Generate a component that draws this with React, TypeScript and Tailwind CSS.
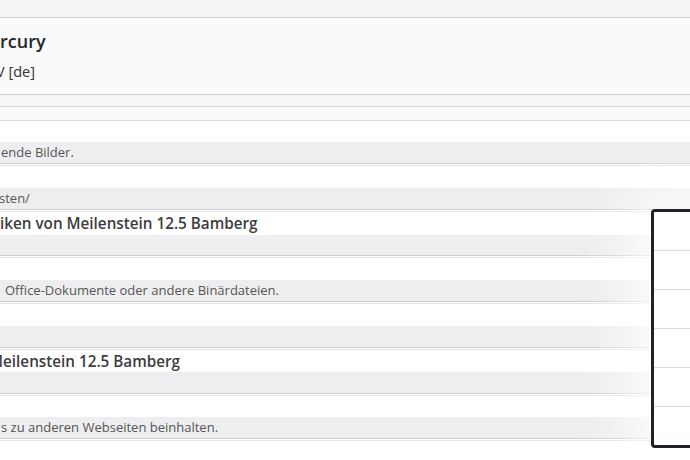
import React from "react";

type Row = {
  top: number;
  band: number;
  text?: string;
  textClass?: string;
  bandText?: string;
  bandClass?: string;
};

// Zeilen der Liste (links abgeschnitten, wie im Original gescrollt)
const rows: Row[] = [
  { top: 21, band: 21, bandText: "ende Bilder.", bandClass: "ml-[1px]" },
  { top: 22, band: 21, bandText: "sten/", bandClass: "-ml-[1px]" },
  { top: 23, band: 20, text: "iken von Meilenstein 12.5 Bamberg", textClass: "ml-[0px]" },
  { top: 22, band: 21, bandText: "Office-Dokumente oder andere Binärdateien.", bandClass: "ml-[5px]" },
  { top: 22, band: 21 },
  { top: 22, band: 21, text: "Meilenstein 12.5 Bamberg", textClass: "-ml-[11px]" },
  { top: 21, band: 21, bandText: "s zu anderen Webseiten beinhalten.", bandClass: "ml-[1px]" },
];

function Separator() {
  return <div className="h-[3px] border-t border-b border-t-[#cfcfd2] border-b-[#e4e4e6] bg-white" />;
}

function Entry({ row }: { row: Row }) {
  return (
    <>
      <div
        className="bg-white whitespace-nowrap text-[15.25px] font-semibold text-[#3d3d3d]"
        style={{ height: row.top, lineHeight: `${row.top}px` }}
      >
        {row.text ? <span className={`block ${row.textClass ?? ""}`}>{row.text}</span> : null}
      </div>
      <div
        className="bg-[#eeeef0] whitespace-nowrap text-[13px] text-[#555]"
        style={{ height: row.band, lineHeight: `${row.band}px` }}
      >
        {row.bandText ? <span className={`block ${row.bandClass ?? ""}`}>{row.bandText}</span> : null}
      </div>
      <Separator />
    </>
  );
}

export default function App() {
  return (
    <div className="relative h-[460px] w-[690px] overflow-hidden bg-white font-['Open_Sans',sans-serif]">
      <div className="h-[18px] border-b border-[#d0d0d3] bg-[#f4f5f7]" />
      <div className="h-[77px] border-b border-[#cfcfd2] bg-[#f9fafb] pt-[11px] whitespace-nowrap">
        <div className="text-[18px] font-semibold leading-[24px] text-[#262626]">rcury</div>
        <div className="-ml-[4px] mt-[9px] text-[14.5px] leading-[20px] text-[#333]">V [de]</div>
      </div>
      <div className="h-[12px] border-b border-[#d3d3d6] bg-[#f6f6f8]" />
      <div className="h-[14px] border-b border-[#dcdcdf] bg-[#fafafb]" />
      {rows.map((row, i) => (
        <Entry key={i} row={row} />
      ))}

      <div className="absolute left-[651px] top-[209px] h-[239px] w-[60px] rounded-[4px] border-[3px] border-[#1f2327] bg-white shadow-[0_0_55px_20px_rgba(255,255,255,0.9)]">
        <div className="flex flex-col">
          {[0, 1, 2, 3, 4].map((i) => (
            <div key={i} className="h-[39px] border-b border-[#d9d9dc]" />
          ))}
        </div>
      </div>
    </div>
  );
}
